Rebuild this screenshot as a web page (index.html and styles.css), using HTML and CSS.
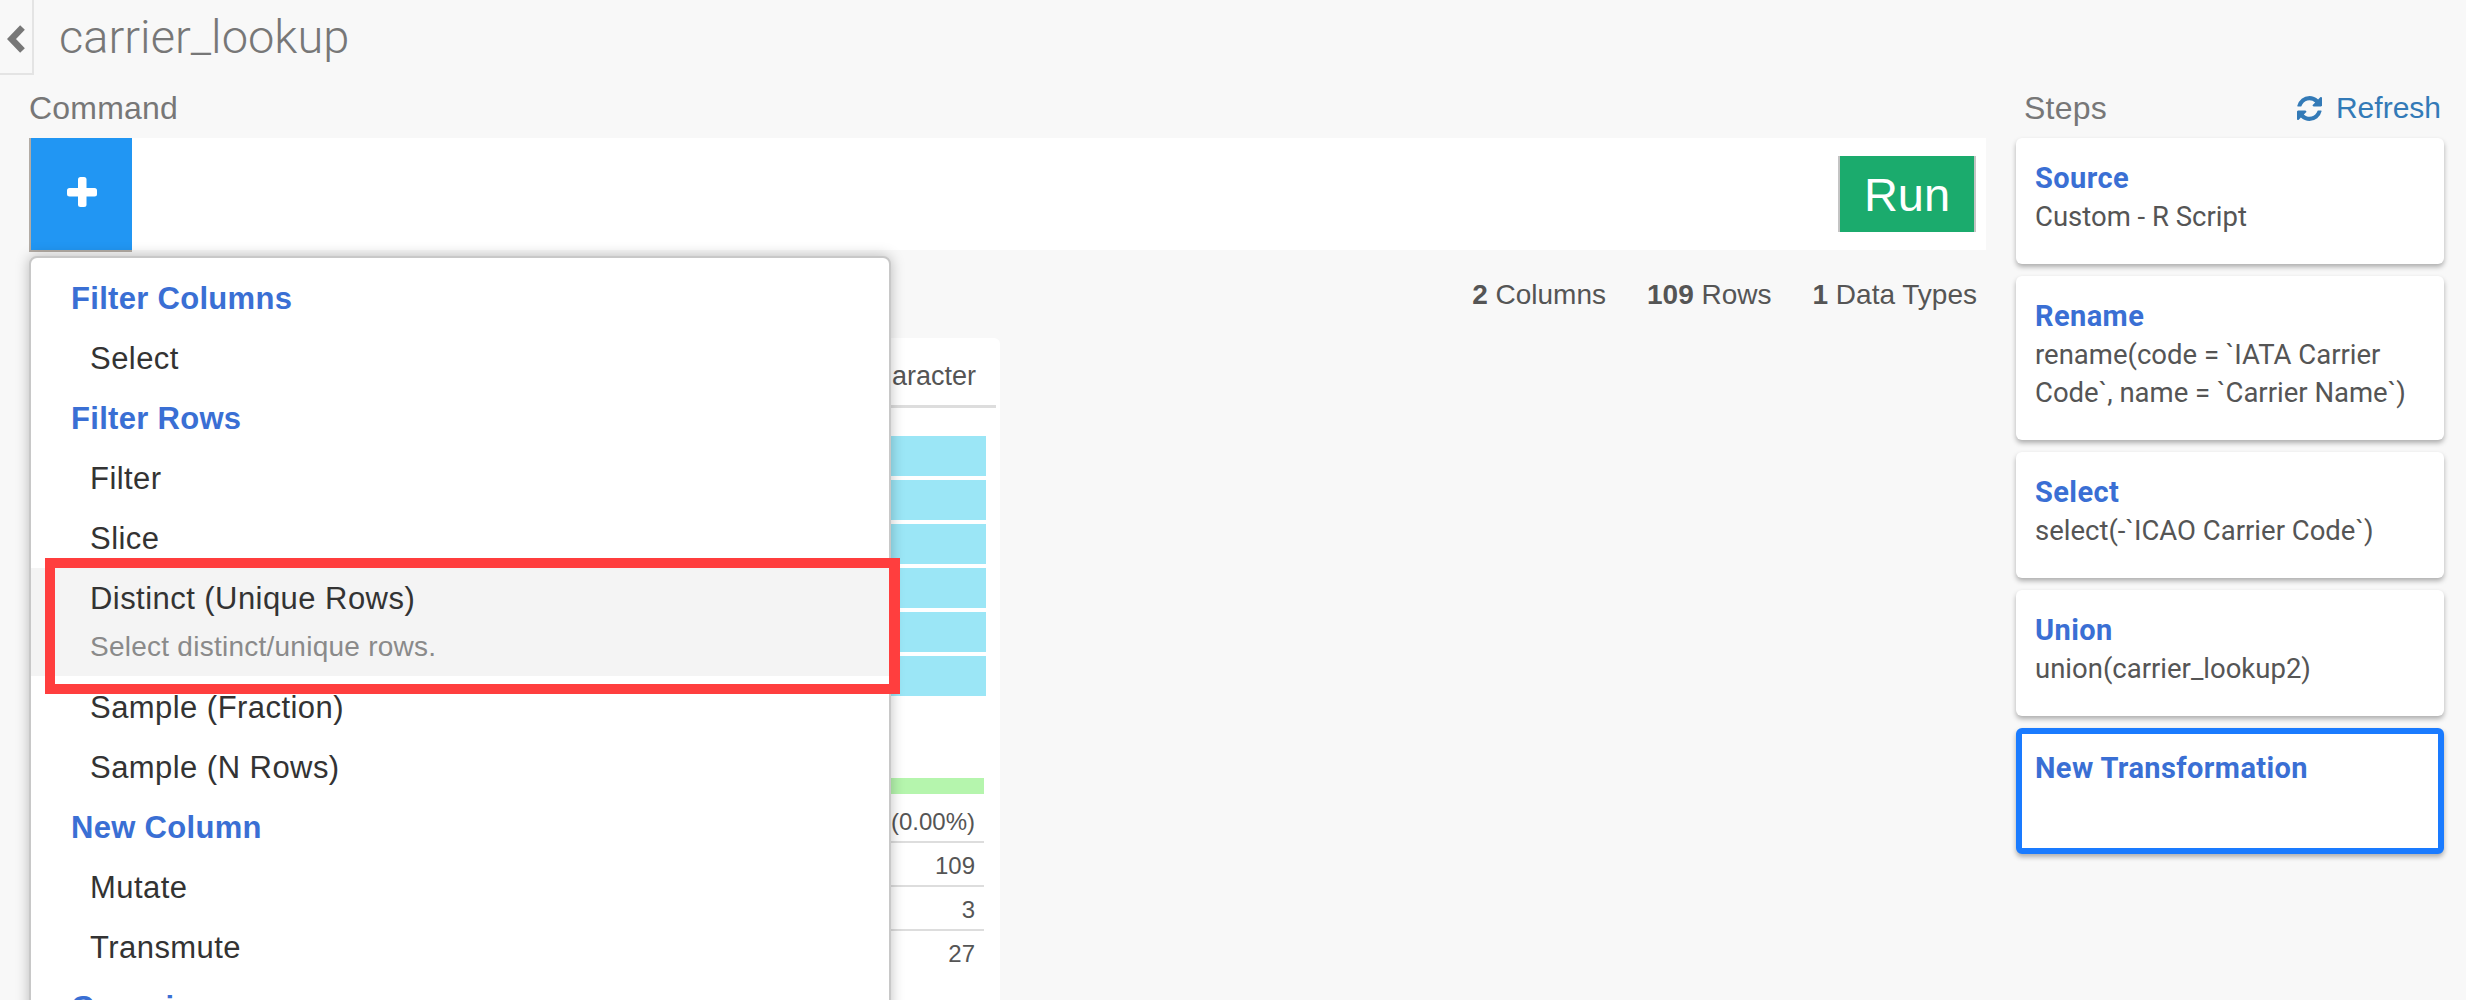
FILE: index.html
```html
<!DOCTYPE html>
<html lang="en">
<head>
    <meta charset="UTF-8">
    <title>carrier_lookup</title>
    <link rel="stylesheet" href="styles.css">
</head>
<body>
    <header class="topbar">
        <a class="back-tab">
            <svg width="32" height="73" viewBox="0 0 32 73"><path d="M22.5 27.5 L11.5 39 L22.5 50.5" fill="none" stroke="#777" stroke-width="6.5"/></svg>
        </a>
        <h1 class="page-title">carrier_lookup</h1>
    </header>

    <div class="workspace">
        <main class="command-col">
            <div class="section-head">
                <span class="section-label">Command</span>
            </div>
            <div class="command-area">
                <div class="command-bar">
                    <button class="add-btn">
                        <svg width="30" height="30" viewBox="0 0 30 30"><rect x="11" y="0" width="8.5" height="30" rx="2.5" fill="#fff"/><rect x="0" y="11" width="30" height="8.5" rx="2.5" fill="#fff"/></svg>
                    </button>
                    <button class="run-btn">Run</button>
                </div>

                <div class="menu">
                    <div class="menu-head">Filter Columns</div>
                    <div class="menu-item">Select</div>
                    <div class="menu-head">Filter Rows</div>
                    <div class="menu-item">Filter</div>
                    <div class="menu-item">Slice</div>
                    <div class="menu-item active">
                        Distinct (Unique Rows)
                        <div class="menu-desc">Select distinct/unique rows.</div>
                        <div class="highlight-box"></div>
                    </div>
                    <div class="menu-item">Sample (Fraction)</div>
                    <div class="menu-item">Sample (N Rows)</div>
                    <div class="menu-head">New Column</div>
                    <div class="menu-item">Mutate</div>
                    <div class="menu-item">Transmute</div>
                    <div class="menu-head">Grouping</div>
                </div>
            </div>

            <div class="stats">
                <span><b>2</b> Columns</span>
                <span><b>109</b> Rows</span>
                <span><b>1</b> Data Types</span>
            </div>

            <section class="summary">
                <div class="summary-head">Character</div>
                <div class="bars">
                    <div class="bar"></div>
                    <div class="bar"></div>
                    <div class="bar"></div>
                    <div class="bar"></div>
                    <div class="bar"></div>
                    <div class="bar"></div>
                </div>
                <div class="fill-bar"></div>
                <div class="stat-row">(0.00%)</div>
                <div class="stat-row">109</div>
                <div class="stat-row">3</div>
                <div class="stat-row">27</div>
            </section>
        </main>

        <aside class="steps-col">
            <div class="section-head">
                <span class="section-label steps-label">Steps</span>
                <a class="refresh">
                    <svg width="25" height="25" viewBox="0 0 1536 1536"><path fill="#337ab7" d="M1511 928q0 5-1 7-64 268-268 434.5t-478 166.5q-146 0-282.5-55t-243.5-157l-129 129q-19 19-45 19t-45-19-19-45v-448q0-26 19-45t45-19h448q26 0 45 19t19 45-19 45l-137 137q71 66 161 102t187 36q134 0 250-65t186-179q11-17 53-117 8-23 30-23h192q13 0 22.5 9.5t9.5 22.5zm25-800v448q0 26-19 45t-45 19h-448q-26 0-45-19t-19-45 19-45l138-138q-148-137-349-137-134 0-250 65t-186 179q-11 17-53 117-8 23-30 23h-199q-13 0-22.5-9.5t-9.5-22.5v-7q65-268 270-434.5t480-166.5q146 0 284 55.5t245 156.5l130-129q19-19 45-19t45 19 19 45z"/></svg>
                    Refresh
                </a>
            </div>
            <div class="step-list">
                <div class="step">
                    <div class="step-title">Source</div>
                    <div class="step-text">Custom - R Script</div>
                </div>
                <div class="step">
                    <div class="step-title">Rename</div>
                    <div class="step-text">rename(code = `IATA Carrier Code`, name = `Carrier Name`)</div>
                </div>
                <div class="step">
                    <div class="step-title">Select</div>
                    <div class="step-text">select(-`ICAO Carrier Code`)</div>
                </div>
                <div class="step">
                    <div class="step-title">Union</div>
                    <div class="step-text">union(carrier_lookup2)</div>
                </div>
                <div class="step step-new">
                    <div class="step-title">New Transformation</div>
                </div>
            </div>
        </aside>
    </div>
</body>
</html>
```

FILE: styles.css
```css
body {
    font-family: "Liberation Sans", Arial, sans-serif;
    margin: 0;
    height: 1000px;
    overflow: hidden;
    background-color: #f8f8f8;
    color: #555;
}
.topbar {
    display: flex;
    align-items: flex-start;
    height: 75px;
}
.back-tab {
    display: block;
    width: 32px;
    height: 73px;
    border-right: 2px solid #e4e4e4;
    border-bottom: 2px solid #e4e4e4;
}
.back-tab svg {
    display: block;
}
.page-title {
    margin: 0 0 0 25px;
    font-family: Roboto, "Liberation Sans", sans-serif;
    font-size: 47px;
    font-weight: 300;
    line-height: 74px;
    color: #777;
}
.workspace {
    display: flex;
    gap: 30px;
    padding-left: 29px;
}
.command-col {
    width: 1957px;
}
.steps-col {
    width: 428px;
}
.section-head {
    display: flex;
    justify-content: space-between;
    align-items: center;
    box-sizing: border-box;
    height: 63px;
    padding-top: 3px;
}
.section-label {
    font-size: 32px;
    letter-spacing: 0.2px;
    color: #777;
}
.steps-label {
    padding-left: 8px;
}
.refresh {
    display: flex;
    align-items: center;
    gap: 14px;
    padding-right: 3px;
    font-size: 30px;
    color: #337ab7;
}
.command-area {
    position: relative;
}
.command-bar {
    display: flex;
    justify-content: space-between;
    align-items: center;
    height: 112px;
    background-color: #fff;
}
.add-btn {
    display: flex;
    align-items: center;
    justify-content: center;
    align-self: flex-start;
    box-sizing: border-box;
    width: 103px;
    height: 114px;
    padding: 0 0 4px;
    border: 0;
    border-left: 2px solid #b3aca5;
    border-bottom: 2px solid #b3aca5;
    background-color: #2196f3;
}
.run-btn {
    box-sizing: border-box;
    width: 138px;
    height: 76px;
    margin-right: 10px;
    padding: 0;
    border: 0;
    border-left: 2px solid #c4c4c4;
    border-right: 2px solid #c4c4c4;
    background-color: #1bab6d;
    color: #fff;
    font-family: inherit;
    font-size: 47px;
}
.menu {
    position: absolute;
    top: 118px;
    left: 0;
    z-index: 2;
    box-sizing: border-box;
    width: 862px;
    padding: 10px 0;
    border: 2px solid #c8c8c8;
    border-radius: 8px;
    background-color: #fff;
    box-shadow: 0 0 14px rgba(0, 0, 0, 0.25);
}
.menu-head {
    height: 60px;
    padding-left: 40px;
    line-height: 62px;
    font-size: 31px;
    font-weight: bold;
    letter-spacing: 0.3px;
    color: #3a6fd4;
}
.menu-item {
    position: relative;
    height: 60px;
    padding-left: 59px;
    line-height: 62px;
    font-size: 31px;
    letter-spacing: 0.45px;
    color: #333;
}
.menu-item.active {
    height: auto;
    margin-bottom: 1px;
    padding-bottom: 12px;
    background-color: #f4f4f4;
}
.menu-desc {
    line-height: 34px;
    font-size: 28px;
    letter-spacing: 0.25px;
    color: #8a8a8a;
}
.highlight-box {
    position: absolute;
    top: -10px;
    left: 14px;
    right: -11px;
    bottom: -18px;
    border: 10px solid #ff3e3e;
    border-right-width: 11px;
}
.stats {
    display: flex;
    justify-content: flex-end;
    gap: 41px;
    height: 88px;
    padding-right: 9px;
    line-height: 90px;
    font-size: 28px;
    color: #555;
}
.summary {
    width: 971px;
    height: 700px;
    border-radius: 6px 6px 0 0;
    background-color: #fff;
}
.summary-head {
    height: 67px;
    margin-right: 4px;
    border-bottom: 3px solid #ddd;
    padding-right: 20px;
    text-align: right;
    line-height: 76px;
    font-size: 27px;
    color: #555;
}
.bars {
    display: flex;
    flex-direction: column;
    gap: 4px;
    margin: 28px 14px 0 40px;
}
.bar {
    height: 40px;
    background-color: #9be6f6;
}
.fill-bar {
    height: 16px;
    margin: 82px 16px 5px 40px;
    background-color: #b5f5ad;
}
.stat-row {
    box-sizing: border-box;
    height: 44px;
    margin: 0 16px 0 40px;
    border-bottom: 2px solid #ddd;
    padding-right: 9px;
    text-align: right;
    line-height: 46px;
    font-size: 24px;
    color: #555;
}
.stat-row:last-child {
    border-bottom: 0;
}
.step-list {
    display: flex;
    flex-direction: column;
    gap: 12px;
}
.step {
    box-sizing: border-box;
    min-height: 126px;
    padding: 20px 14px 28px 19px;
    border-radius: 6px;
    background-color: #fff;
    box-shadow: 0 3px 5px rgba(0, 0, 0, 0.3);
    font-family: Roboto, "Liberation Sans", sans-serif;
}
.step-new {
    padding: 14px 8px 22px 13px;
    border: 6px solid #1a7bff;
}
.step-title {
    line-height: 40px;
    font-size: 29px;
    font-weight: bold;
    letter-spacing: 0.4px;
    color: #3a6fd4;
}
.step-text {
    line-height: 38px;
    font-size: 27.5px;
    color: #555;
}
```
